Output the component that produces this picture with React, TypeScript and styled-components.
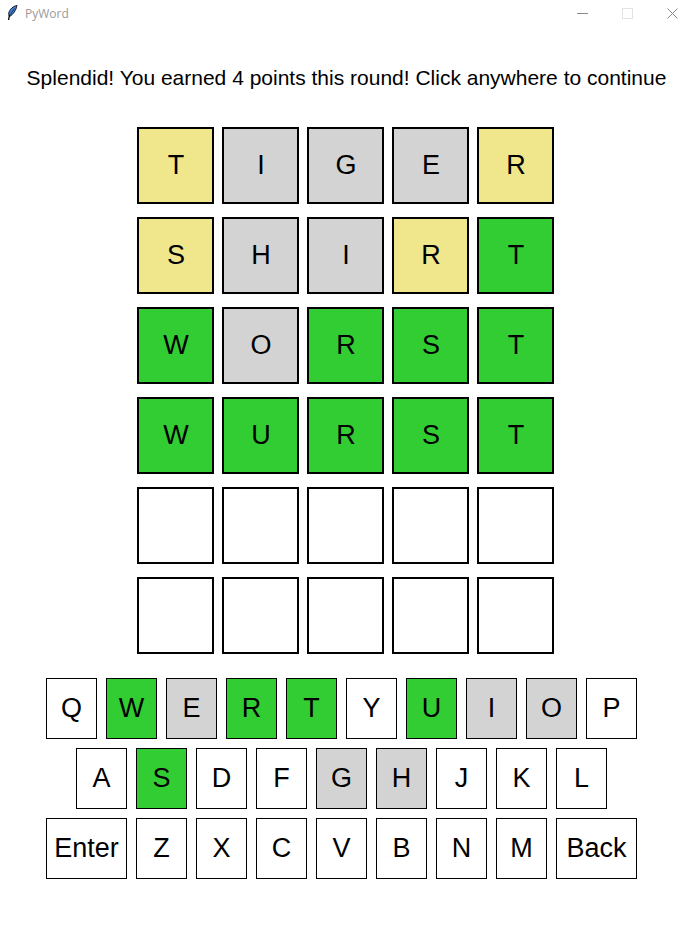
import React from "react";
import styled, { createGlobalStyle } from "styled-components";

type Status = "none" | "present" | "absent" | "correct";

const colors: Record<Status, string> = {
  none: "#ffffff",
  present: "#f0e68c",
  absent: "#d3d3d3",
  correct: "#32cd32",
};

const GlobalStyle = createGlobalStyle`
  html, body {
    margin: 0;
    padding: 0;
    background: #ffffff;
  }
`;

const Window = styled.div`
  width: 695px;
  height: 925px;
  display: flex;
  flex-direction: column;
  align-items: center;
  overflow: hidden;
  font-family: "Liberation Sans", Arial, sans-serif;
  color: #000000;
`;

const TitleBar = styled.div`
  width: 100%;
  height: 26px;
  display: flex;
  align-items: center;
  box-sizing: border-box;
  padding-left: 6px;
`;

const AppName = styled.span`
  margin-left: 7px;
  font-family: "Open Sans", sans-serif;
  font-size: 12px;
  color: #9a9a9a;
`;

const WindowControls = styled.div`
  margin-left: auto;
  display: flex;
  align-items: center;
`;

const WindowButton = styled.div`
  width: 45px;
  height: 26px;
  display: flex;
  align-items: center;
  justify-content: center;
`;

const Message = styled.div`
  margin-top: 13px;
  margin-right: 2px;
  height: 88px;
  font-size: 21px;
  line-height: 78px;
  white-space: nowrap;
`;

const Board = styled.div`
  margin-right: 4px;
  display: flex;
  flex-direction: column;
  gap: 13px;
`;

const BoardRow = styled.div`
  display: flex;
  gap: 8px;
`;

const Tile = styled.div<{ $status: Status }>`
  width: 77px;
  height: 77px;
  box-sizing: border-box;
  border: 2px solid #000000;
  padding-left: 1px;
  background: ${(p) => colors[p.$status]};
  display: flex;
  align-items: center;
  justify-content: center;
  font-size: 27px;
`;

const Keyboard = styled.div`
  margin-top: 24px;
  margin-right: 12px;
  display: flex;
  flex-direction: column;
  gap: 9px;
`;

const KeyRow = styled.div`
  display: flex;
  justify-content: center;
  gap: 9px;
`;

const Key = styled.div<{ $status: Status; $wide?: boolean }>`
  width: ${(p) => (p.$wide ? "81px" : "51px")};
  height: 61px;
  box-sizing: border-box;
  border: 1px solid #000000;
  background: ${(p) => colors[p.$status]};
  display: flex;
  align-items: center;
  justify-content: center;
  font-size: 27px;
`;

const guesses: [string, string][] = [
  ["TIGER", "paaap"],
  ["SHIRT", "paapc"],
  ["WORST", "caccc"],
  ["WURST", "ccccc"],
  ["     ", "nnnnn"],
  ["     ", "nnnnn"],
];

const codes: Record<string, Status> = {
  n: "none",
  p: "present",
  a: "absent",
  c: "correct",
};

const keyRows = [
  ["Q", "W", "E", "R", "T", "Y", "U", "I", "O", "P"],
  ["A", "S", "D", "F", "G", "H", "J", "K", "L"],
  ["Enter", "Z", "X", "C", "V", "B", "N", "M", "Back"],
];

const correctKeys = "WRTUS";
const absentKeys = "EIOGH";

const keyStatus = (k: string): Status => {
  if (k.length > 1) return "none";
  if (correctKeys.includes(k)) return "correct";
  if (absentKeys.includes(k)) return "absent";
  return "none";
};

const Feather = () => (
  <svg width="12" height="16" viewBox="0 0 12 16">
    <path d="M11 0.5C7.5 1 3.5 4 2.6 8.5L3.4 11.5C7 10 10.2 5 11 0.5Z" fill="#3f7fcf" stroke="#0b1020" strokeWidth="0.9" />
    <path d="M8.5 3.5L4 10" stroke="#0b1020" strokeWidth="0.6" fill="none" />
    <path d="M3.4 10L2.6 15" stroke="#000000" strokeWidth="1.3" fill="none" />
  </svg>
);

const App = () => {
  return (
    <Window>
      <GlobalStyle />
      <TitleBar>
        <Feather />
        <AppName>PyWord</AppName>
        <WindowControls>
          <WindowButton>
            <svg width="11" height="11" viewBox="0 0 11 11">
              <path d="M0 5.5H11" stroke="#8a8a8a" strokeWidth="1" />
            </svg>
          </WindowButton>
          <WindowButton>
            <svg width="11" height="11" viewBox="0 0 11 11">
              <rect x="0.5" y="0.5" width="10" height="10" fill="none" stroke="#e3e3e3" strokeWidth="1" />
            </svg>
          </WindowButton>
          <WindowButton>
            <svg width="11" height="11" viewBox="0 0 11 11">
              <path d="M0.5 0.5L10.5 10.5M10.5 0.5L0.5 10.5" stroke="#8a8a8a" strokeWidth="1" />
            </svg>
          </WindowButton>
        </WindowControls>
      </TitleBar>
      <Message>Splendid! You earned 4 points this round! Click anywhere to continue</Message>
      <Board>
        {guesses.map(([word, marks], r) => (
          <BoardRow key={r}>
            {word.split("").map((ch, c) => (
              <Tile key={c} $status={codes[marks[c]]}>
                {ch.trim()}
              </Tile>
            ))}
          </BoardRow>
        ))}
      </Board>
      <Keyboard>
        {keyRows.map((row, i) => (
          <KeyRow key={i}>
            {row.map((k) => (
              <Key key={k} $status={keyStatus(k)} $wide={k.length > 1}>
                {k}
              </Key>
            ))}
          </KeyRow>
        ))}
      </Keyboard>
    </Window>
  );
};

export default App;
